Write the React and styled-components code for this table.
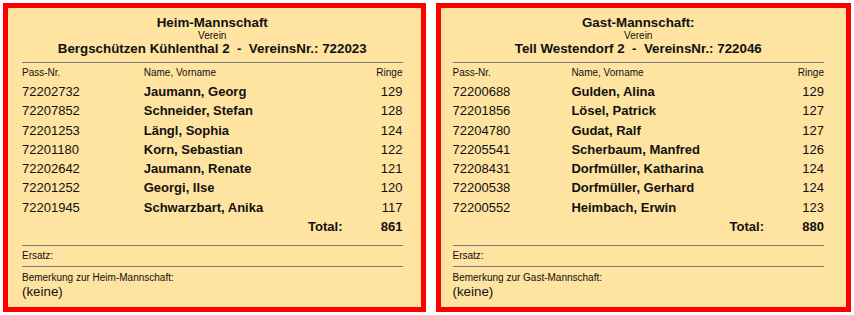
import styled, { createGlobalStyle } from "styled-components";

const GlobalStyle = createGlobalStyle`
  body {
    margin: 0;
    background: #ffffff;
    font-family: "Liberation Sans", Arial, sans-serif;
    color: #111111;
  }
`;

const Page = styled.div`
  display: flex;
  gap: 10px;
  padding: 3px;
`;

const Panel = styled.div`
  box-sizing: border-box;
  width: ${(p) => p.$width}px;
  height: 309px;
  border: 5px solid #ff0000;
  background: #ffe3a0;
  padding: 7px ${(p) => p.$padRight}px 0 ${(p) => p.$padLeft}px;
`;

const Head = styled.div`
  text-align: center;
`;

const Title = styled.div`
  font-size: 13.33px;
  font-weight: 700;
  line-height: 15px;
`;

const Small = styled.div`
  font-size: 10px;
  line-height: ${(p) => p.$lh || 12}px;
  text-align: ${(p) => p.$align || "left"};
`;

const Club = styled.div`
  font-size: 13.33px;
  font-weight: 700;
  line-height: 16px;
  white-space: pre;
`;

const Rule = styled.hr`
  border: 0;
  height: 1px;
  background: #7a7a7a;
  margin: ${(p) => p.$mt}px 0 0 0;
`;

const Grid = styled.div`
  display: grid;
  grid-template-columns: 32% 1fr 58px;
  margin-top: ${(p) => p.$mt || 0}px;
`;

const Cell = styled.div`
  font-size: ${(p) => (p.$small ? 10 : 13)}px;
  font-weight: ${(p) => (p.$bold ? 700 : 400)};
  line-height: ${(p) => (p.$small ? "12px" : "19.3px")};
  text-align: ${(p) => (p.$right ? "right" : "left")};
  padding-right: ${(p) => p.$pr || 0}px;
  white-space: nowrap;
`;

const Note = styled.div`
  font-size: 13.33px;
  line-height: 16px;
`;

const teams = [
  {
    title: "Heim-Mannschaft",
    club: "Bergschützen Kühlenthal 2  -  VereinsNr.: 722023",
    note: "Bemerkung zur Heim-Mannschaft:",
    total: 861,
    width: 423,
    padLeft: 14,
    padRight: 18,
    rows: [
      ["72202732", "Jaumann, Georg", 129],
      ["72207852", "Schneider, Stefan", 128],
      ["72201253", "Längl, Sophia", 124],
      ["72201180", "Korn, Sebastian", 122],
      ["72202642", "Jaumann, Renate", 121],
      ["72201252", "Georgi, Ilse", 120],
      ["72201945", "Schwarzbart, Anika", 117],
    ],
  },
  {
    title: "Gast-Mannschaft:",
    club: "Tell Westendorf 2  -  VereinsNr.: 722046",
    note: "Bemerkung zur Gast-Mannschaft:",
    total: 880,
    width: 416,
    padLeft: 12,
    padRight: 22,
    rows: [
      ["72200688", "Gulden, Alina", 129],
      ["72201856", "Lösel, Patrick", 127],
      ["72204780", "Gudat, Ralf", 127],
      ["72205541", "Scherbaum, Manfred", 126],
      ["72208431", "Dorfmüller, Katharina", 124],
      ["72200538", "Dorfmüller, Gerhard", 124],
      ["72200552", "Heimbach, Erwin", 123],
    ],
  },
];

function TeamPanel({ team }) {
  return (
    <Panel $width={team.width} $padLeft={team.padLeft} $padRight={team.padRight}>
      <Head>
        <Title>{team.title}</Title>
        <Small $align="center" $lh={11}>Verein</Small>
        <Club>{team.club}</Club>
      </Head>
      <Rule $mt={5} />
      <Grid $mt={4}>
        <Cell $small>Pass-Nr.</Cell>
        <Cell $small>Name, Vorname</Cell>
        <Cell $small $right>Ringe</Cell>
      </Grid>
      <Grid $mt={3}>
        {team.rows.map((r) => [
          <Cell key={r[0] + "p"}>{r[0]}</Cell>,
          <Cell key={r[0] + "n"} $bold>{r[1]}</Cell>,
          <Cell key={r[0] + "r"} $right>{r[2]}</Cell>,
        ])}
        <Cell />
        <Cell $bold $right $pr={2}>Total:</Cell>
        <Cell $bold $right>{team.total}</Cell>
      </Grid>
      <Rule $mt={9} />
      <Small style={{ marginTop: 4 }}>Ersatz:</Small>
      <Rule $mt={4} />
      <Small style={{ marginTop: 5 }}>{team.note}</Small>
      <Note>(keine)</Note>
    </Panel>
  );
}

export default function App() {
  return (
    <>
      <GlobalStyle />
      <Page>
        {teams.map((t) => (
          <TeamPanel key={t.title} team={t} />
        ))}
      </Page>
    </>
  );
}
